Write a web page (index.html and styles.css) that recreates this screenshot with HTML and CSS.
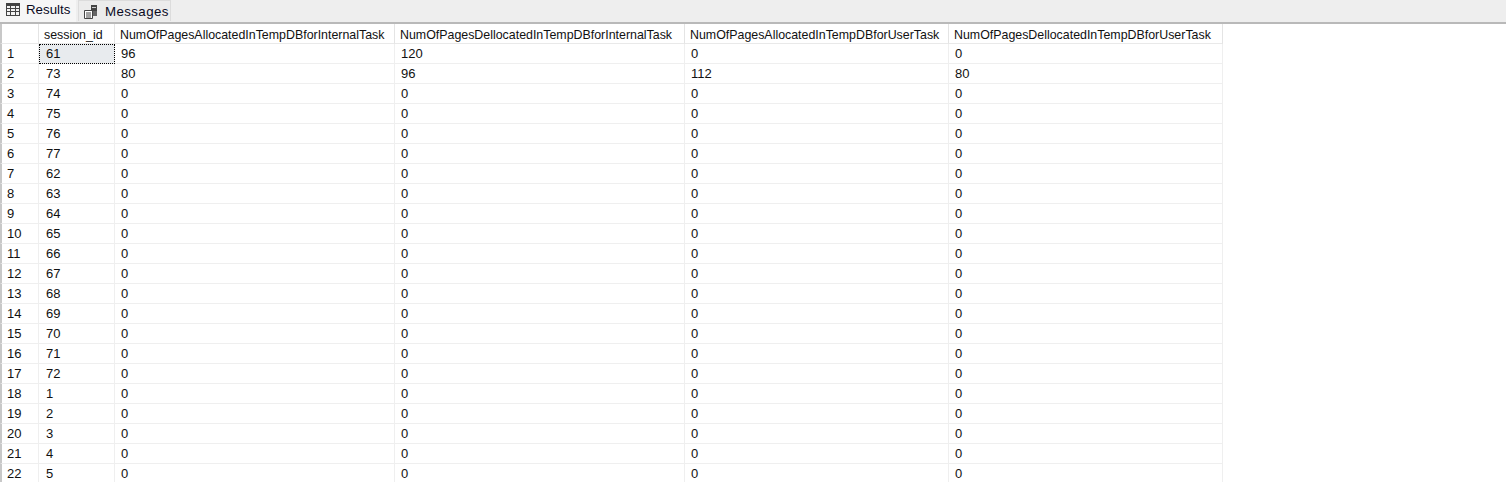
FILE: index.html
```html
<!DOCTYPE html>
<html lang="en">
<head>
<meta charset="utf-8">
<title>Results</title>
<link rel="stylesheet" href="styles.css">
</head>
<body>
<div class="tabs">
  <div class="tab active">
    <svg class="icon" width="14" height="13" viewBox="0 0 14 13"><rect x="0.5" y="0.5" width="13" height="12" fill="#f4f4f4" stroke="#444"/><path d="M0 5.5H14M0 8.5H14M4.5 1V12M9.5 1V12" stroke="#444" fill="none"/><rect x="0" y="0" width="14" height="3" fill="#444"/></svg>
    <span>Results</span>
  </div>
  <div class="tab second">
    <svg class="icon" width="14" height="14" viewBox="0 0 14 14"><path d="M0.5 5.5H8.5V13.5H0.5Z" fill="#fff" stroke="#444"/><path d="M2 8H7M2 10H7M2 12H7" stroke="#444"/><rect x="7" y="0" width="6" height="6" fill="#444"/><path d="M8 2.5H12" stroke="#ccc"/><path d="M9 6H13V11H9Z" fill="#666"/></svg>
    <span>Messages</span>
  </div>
</div>
<table class="grid">
  <colgroup><col class="c0"><col class="c1"><col class="c2"><col class="c3"><col class="c4"><col class="c5"></colgroup>
  <thead><tr><th></th><th>session_id</th><th>NumOfPagesAllocatedInTempDBforInternalTask</th><th>NumOfPagesDellocatedInTempDBforInternalTask</th><th>NumOfPagesAllocatedInTempDBforUserTask</th><th>NumOfPagesDellocatedInTempDBforUserTask</th></tr></thead>
  <tbody>
    <tr><td class="num">1</td><td class="sel">61</td><td>96</td><td>120</td><td>0</td><td>0</td></tr>
    <tr><td class="num">2</td><td class="first">73</td><td>80</td><td>96</td><td>112</td><td>80</td></tr>
    <tr><td class="num">3</td><td class="first">74</td><td>0</td><td>0</td><td>0</td><td>0</td></tr>
    <tr><td class="num">4</td><td class="first">75</td><td>0</td><td>0</td><td>0</td><td>0</td></tr>
    <tr><td class="num">5</td><td class="first">76</td><td>0</td><td>0</td><td>0</td><td>0</td></tr>
    <tr><td class="num">6</td><td class="first">77</td><td>0</td><td>0</td><td>0</td><td>0</td></tr>
    <tr><td class="num">7</td><td class="first">62</td><td>0</td><td>0</td><td>0</td><td>0</td></tr>
    <tr><td class="num">8</td><td class="first">63</td><td>0</td><td>0</td><td>0</td><td>0</td></tr>
    <tr><td class="num">9</td><td class="first">64</td><td>0</td><td>0</td><td>0</td><td>0</td></tr>
    <tr><td class="num">10</td><td class="first">65</td><td>0</td><td>0</td><td>0</td><td>0</td></tr>
    <tr><td class="num">11</td><td class="first">66</td><td>0</td><td>0</td><td>0</td><td>0</td></tr>
    <tr><td class="num">12</td><td class="first">67</td><td>0</td><td>0</td><td>0</td><td>0</td></tr>
    <tr><td class="num">13</td><td class="first">68</td><td>0</td><td>0</td><td>0</td><td>0</td></tr>
    <tr><td class="num">14</td><td class="first">69</td><td>0</td><td>0</td><td>0</td><td>0</td></tr>
    <tr><td class="num">15</td><td class="first">70</td><td>0</td><td>0</td><td>0</td><td>0</td></tr>
    <tr><td class="num">16</td><td class="first">71</td><td>0</td><td>0</td><td>0</td><td>0</td></tr>
    <tr><td class="num">17</td><td class="first">72</td><td>0</td><td>0</td><td>0</td><td>0</td></tr>
    <tr><td class="num">18</td><td class="first">1</td><td>0</td><td>0</td><td>0</td><td>0</td></tr>
    <tr><td class="num">19</td><td class="first">2</td><td>0</td><td>0</td><td>0</td><td>0</td></tr>
    <tr><td class="num">20</td><td class="first">3</td><td>0</td><td>0</td><td>0</td><td>0</td></tr>
    <tr><td class="num">21</td><td class="first">4</td><td>0</td><td>0</td><td>0</td><td>0</td></tr>
    <tr><td class="num">22</td><td class="first">5</td><td>0</td><td>0</td><td>0</td><td>0</td></tr>
  </tbody>
</table>
</body>
</html>
```
FILE: styles.css
```css
html, body { margin: 0; padding: 0; height: 482px; overflow: hidden; background: #fff; }
body { font-family: "Liberation Sans", Arial, sans-serif; color: #111; }
.tabs { display: flex; height: 22px; background: #eeeeee; border-bottom: 2px solid #b9b9b9; }
.tab { display: flex; align-items: center; font-size: 13.3px; color: #0a0a1e; box-sizing: border-box; }
.tab.active { width: 76px; height: 22px; padding: 0 0 3px 6px; gap: 6px; background: #f6f6f6; }
.tab.second { width: 93px; height: 21px; margin-left: 2px; padding: 1px 0 0 5px; gap: 7px; background: #ececec; border: 1px solid #dcdcdc; border-bottom: 0; letter-spacing: 0.4px; }
.icon { flex: none; }
.grid { border-collapse: separate; border-spacing: 0; table-layout: fixed; width: 1223px; font-size: 13px; }
.c0 { width: 39px; } .c1 { width: 76px; } .c2 { width: 280px; } .c3 { width: 290px; } .c4 { width: 264px; } .c5 { width: 274px; }
th, td { height: 20px; padding: 0 0 0 5px; box-sizing: border-box; white-space: nowrap; overflow: hidden; text-align: left; font-weight: normal; border-right: 1px solid #efefef; border-bottom: 1px solid #efefef; }
th { font-size: 12.4px; border-right-color: #e4e4e4; border-bottom-color: #e9e9e9; background: #fff; padding-top: 3px; }
td { padding-left: 6px; }
td.first, td.sel { padding-left: 7px; }
td.num { padding-left: 5px; border-left: 2px solid #c8c8c8; }
th:first-child { border-left: 2px solid #c8c8c8; }
td.sel { background: #e8ebee; outline: 1px dotted #000; outline-offset: -1px; }
```
